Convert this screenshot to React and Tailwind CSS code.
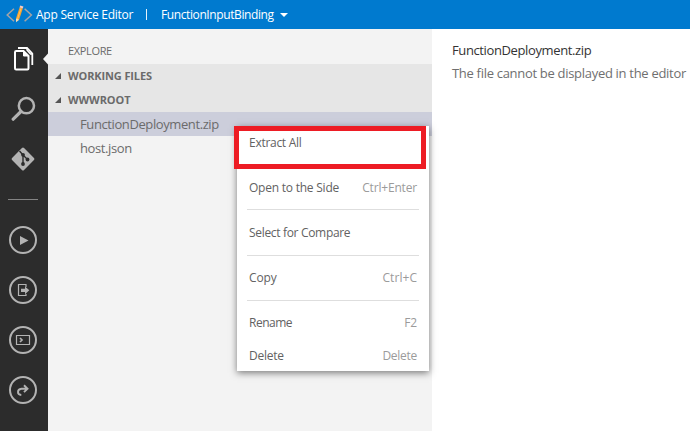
function Caret() {
  return (
    <svg className="block h-[6px] w-[6px] shrink-0" viewBox="0 0 6 6">
      <path d="M6 0V6H0Z" fill="#555" />
    </svg>
  );
}

function Logo() {
  return (
    <svg className="mt-px block h-[22px] w-[28px] shrink-0" viewBox="0 0 28 22" fill="none">
      <path d="M9 4.700 2.200 11 9 17.300M19.600 4.700l6.800 6.300-6.800 6.300" stroke="#a4a4a6" strokeWidth="1.500" />
      <path d="M11 14.500 14.600 3.500l3.200 1-3.700 11.200-2.200 1.500Z" fill="#f7a12b" />
      <path d="M12.400 15.200 16.100 4.200" stroke="#ffc566" strokeWidth="0.900" />
      <path d="m14.600 3.500.6-1.900 3.200 1L17.800 4.500Z" fill="#f3c9c2" />
      <path d="m11 14.500v3.700l3.100-2.500Z" fill="#f2dcb8" />
    </svg>
  );
}

function Ring({ children }) {
  return (
    <div className="h-[50px] w-12 pt-[11px] pl-[9px]">
      <svg className="block h-7 w-7" viewBox="0 0 28 28" fill="none" stroke="#b3b3b3">
        <circle cx="14" cy="14" r="13" strokeWidth="2" />
        {children}
      </svg>
    </div>
  );
}

function ActivityBar() {
  return (
    <nav className="flex w-12 shrink-0 flex-col bg-[#2c2c2c]">
      <div className="flex h-[55px] justify-between pt-[17px] pl-[13px]">
        <svg className="block h-[25px] w-[22px]" viewBox="0 0 22 25" fill="none" stroke="#fff">
          <path d="M2 6.200q0-1.200 1.200-1.200H10.500l5 5v12.400q0 1.100-1.100 1.100H3.100Q2 23.500 2 22.300Z" strokeWidth="2" />
          <path d="M10.500 5v5h5Z" fill="#fff" strokeWidth="1" />
          <path d="M5 2h9L19.300 7.500v11.500" strokeWidth="1.800" />
          <path d="M14 2v2l3.500 4h2" strokeWidth="1.500" />
        </svg>
        <svg className="mt-[7px] block h-[12px] w-[5px]" viewBox="0 0 5 12">
          <path d="M5 0.500V11.500L0 6Z" fill="#f3f3f3" />
        </svg>
      </div>
      <div className="h-[49px] pt-[12px] pl-[11px]">
        <svg className="block h-[26px] w-[25px]" viewBox="0 0 25 26" fill="none" stroke="#b3b3b3">
          <circle cx="15.400" cy="9.700" r="7.600" strokeWidth="2.500" />
          <path d="M10 15.500 2.200 23.200" strokeWidth="3.200" strokeLinecap="round" />
        </svg>
      </div>
      <div className="h-[66px] pt-[13px] pl-[10px]">
        <svg className="block h-[26px] w-[26px]" viewBox="0 0 26 26">
          <rect x="4.500" y="4.500" width="17" height="17" rx="1.500" transform="rotate(45 13 13)" fill="#b3b3b3" />
          <path d="M9.500 5 13 9v9M13 9l4.500 4.500" fill="none" stroke="#2c2c2c" strokeWidth="1.400" />
          <circle cx="13" cy="8.800" r="1.900" fill="#2c2c2c" />
          <circle cx="13" cy="18" r="1.900" fill="#2c2c2c" />
          <circle cx="17.500" cy="13.500" r="1.900" fill="#2c2c2c" />
        </svg>
      </div>
      <div className="ml-[8px] h-px w-[30px] bg-[#848484]" />
      <div className="h-[15px]" />
      <Ring>
        <path d="M11 10v9l8.500-4.500Z" fill="#b3b3b3" stroke="none" />
      </Ring>
      <Ring>
        <path d="M17 11V8.500H9.500v11H17V18" strokeWidth="1.200" />
        <path d="M12 12.700h4v-2.300l4.300 3.900-4.300 3.900v-2.300h-4Z" fill="#b3b3b3" stroke="none" />
      </Ring>
      <Ring>
        <path d="M7.500 9.500h13v9h-13Z" strokeWidth="1.200" />
        <path d="m11 12 2 2-2 2" strokeWidth="1.700" />
      </Ring>
      <Ring>
        <path d="M15 9.300l3.500 3.400-3.500 3.400M18 12.700h-5.500q-3.500.300-3.500 3.300 0 2.800 3.300 3" strokeWidth="1.900" />
      </Ring>
    </nav>
  );
}

function MenuItem({ label, hint, labelClass, hintClass }) {
  return (
    <div className="flex h-[33px] items-center justify-between pr-[12px] pl-[12px] text-[12px] whitespace-nowrap">
      <span className={labelClass}>{label}</span>
      {hint && <span className={`text-[#9b9b9b] ${hintClass}`}>{hint}</span>}
    </div>
  );
}

function Separator() {
  return (
    <div className="flex h-[12px] items-center px-[10px]">
      <div className="h-px flex-1 bg-[#dedede]" />
    </div>
  );
}

function ContextMenu() {
  return (
    <div className="absolute top-[126px] left-[237px] h-[245px] w-[192px] bg-white text-[#626262] shadow-[0_2px_7px_rgba(0,0,0,0.5)]">
      <MenuItem label="Extract All" labelClass="tracking-[-0.28px]" />
      <div className="h-[12px]" />
      <MenuItem label="Open to the Side" hint="Ctrl+Enter" labelClass="tracking-[-0.23px]" hintClass="tracking-[-0.18px]" />
      <div className="px-[10px] pt-[5px] pb-[6px]">
        <div className="h-px bg-[#dedede]" />
      </div>
      <MenuItem label="Select for Compare" labelClass="tracking-[-0.32px]" />
      <Separator />
      <MenuItem label="Copy" hint="Ctrl+C" labelClass="tracking-[-0.1px]" hintClass="tracking-[0.05px]" />
      <Separator />
      <MenuItem label="Rename" hint="F2" labelClass="tracking-[-0.5px]" hintClass="tracking-[-0.1px]" />
      <MenuItem label="Delete" hint="Delete" labelClass="tracking-[-0.27px]" hintClass="tracking-[-0.27px]" />
      <div className="absolute top-0 -left-[3px] h-[43px] w-[192px] border-[5px] border-[#ed1c24]" />
    </div>
  );
}

export default function App() {
  return (
    <div className={`relative flex h-[431px] w-[690px] flex-col overflow-hidden bg-white font-["Open_Sans","Noto_Sans",sans-serif]`}>
      <header className="flex h-[29px] shrink-0 items-center bg-[#007acf] pl-[5px] text-[12px] whitespace-nowrap text-white">
        <Logo />
        <span className="ml-[3px] w-[110px] tracking-[-0.25px]">App Service Editor</span>
        <span className="h-[11px] w-px bg-white/90" />
        <span className="ml-[14px] w-[119px] tracking-[-0.4px]">FunctionInputBinding</span>
        <svg className="block h-[4px] w-[8px]" viewBox="0 0 8 4">
          <path d="M0 0H8L4 4Z" fill="#fff" />
        </svg>
      </header>
      <div className="flex flex-1">
        <ActivityBar />
        <aside className="w-[384px] shrink-0 bg-[#f3f3f3] text-[#6b6b6b]">
          <div className="flex h-[35px] items-center pt-[9px] pl-[20px] text-[11px] tracking-[-0.35px]">EXPLORE</div>
          <div className="bg-[#e6e6e6] text-[11px] font-bold">
            <div className="flex h-6 items-center gap-[7px] pl-[7px]">
              <Caret />
              <span className="tracking-[-0.12px]">WORKING FILES</span>
            </div>
            <div className="flex h-6 items-center gap-[7px] pl-[7px]">
              <Caret />
              <span className="tracking-[-0.08px]">WWWROOT</span>
            </div>
          </div>
          <div className="flex h-6 items-center bg-[#cccedb] pt-[2px] pl-8 text-[13px] tracking-[-0.4px]">FunctionDeployment.zip</div>
          <div className="flex h-6 items-center pt-[2px] pl-8 text-[13px] tracking-[-0.4px]">host.json</div>
        </aside>
        <main className="flex-1 pt-[10px] pl-[20px] text-[13px] leading-[23px] whitespace-nowrap">
          <p className="tracking-[-0.38px] text-[#333]">FunctionDeployment.zip</p>
          <p className="tracking-[-0.3px] text-[#6f6f6f]">The file cannot be displayed in the editor</p>
        </main>
      </div>
      <ContextMenu />
    </div>
  );
}
